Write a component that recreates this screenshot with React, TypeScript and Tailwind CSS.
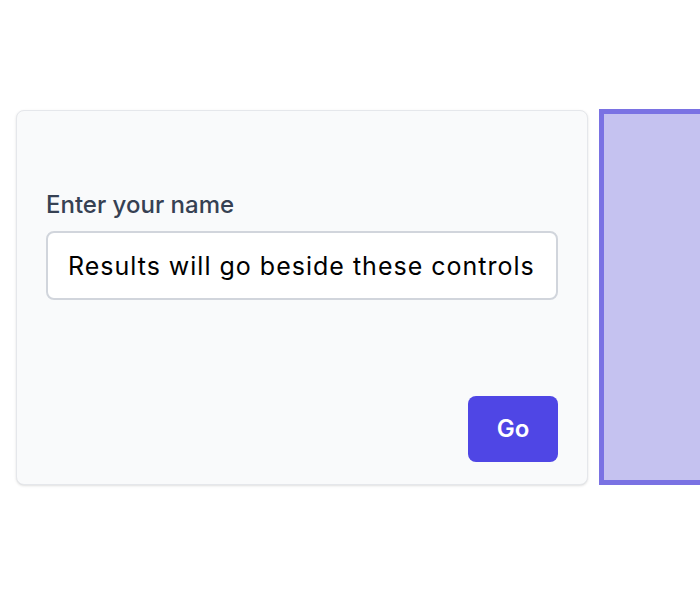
export default function App() {
  return (
    <div className="min-h-[600px] w-[700px] overflow-hidden bg-white" style={{ fontFamily: "Inter, 'Noto Sans', sans-serif" }}>
      <div className="flex gap-[11px] pl-4 pt-[110px]">
        {/* controls card */}
        <div className="flex h-[375px] w-[572px] shrink-0 flex-col rounded-lg border border-gray-200 bg-gray-50 px-[29px] pb-[22px] pt-[78px] shadow-sm">
          <label className="mb-[10px] text-[24px] font-medium leading-8 text-gray-700">Enter your name</label>
          <input
            readOnly
            value="Results will go beside these controls"
            className="h-[69px] w-full rounded-lg border-2 border-gray-300 bg-white px-5 text-[25px] tracking-[1px] text-black outline-none"
          />
          <div className="mt-auto flex justify-end">
            <button className="h-[66px] w-[90px] rounded-lg bg-[#4f46e5] text-[24px] font-semibold text-white">Go</button>
          </div>
        </div>

        {/* results panel */}
        <div className="h-[376px] w-[200px] shrink-0 -translate-y-px border-[5px] border-[#7a72e3] bg-[#c5c2f0]" />
      </div>
    </div>
  );
}
